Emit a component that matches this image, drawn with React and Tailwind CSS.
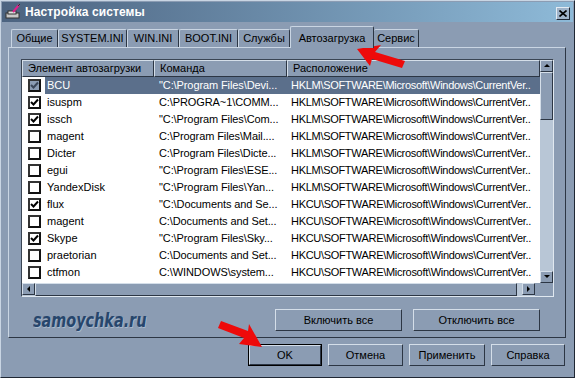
import React from 'react';

const rows = [
  { name: 'BCU', cmd: '"C:\\Program Files\\Devi...', loc: 'HKLM', on: true, sel: true },
  { name: 'isuspm', cmd: 'C:\\PROGRA~1\\COMM...', loc: 'HKLM', on: true },
  { name: 'issch', cmd: '"C:\\Program Files\\Com...', loc: 'HKLM', on: true },
  { name: 'magent', cmd: 'C:\\Program Files\\Mail....', loc: 'HKLM', on: false },
  { name: 'Dicter', cmd: 'C:\\Program Files\\Dicte...', loc: 'HKLM', on: false },
  { name: 'egui', cmd: '"C:\\Program Files\\ESE...', loc: 'HKLM', on: false },
  { name: 'YandexDisk', cmd: '"C:\\Program Files\\Yan...', loc: 'HKLM', on: false },
  { name: 'flux', cmd: '"C:\\Documents and Se...', loc: 'HKCU', on: true },
  { name: 'magent', cmd: 'C:\\Documents and Set...', loc: 'HKCU', on: false },
  { name: 'Skype', cmd: '"C:\\Program Files\\Sky...', loc: 'HKCU', on: true },
  { name: 'praetorian', cmd: 'C:\\Documents and Set...', loc: 'HKCU', on: false },
  { name: 'ctfmon', cmd: 'C:\\WINDOWS\\system...', loc: 'HKCU', on: false },
];

const tabs = [
  { t: 'Общие', w: 'w-[47px]' },
  { t: 'SYSTEM.INI', w: 'w-[69px]' },
  { t: 'WIN.INI', w: 'w-[52px]' },
  { t: 'BOOT.INI', w: 'w-[59px]' },
  { t: 'Службы', w: 'w-[52px]' },
];

function Check({ on, dim }) {
  return (
    <div className={`w-[13px] h-[13px] border-2 border-t-[#333] border-l-[#333] border-b-[#111] border-r-[#111] flex items-center justify-center ${dim ? 'bg-[#8b9cb3]' : 'bg-white'}`}>
      {on && (
        <svg width="9" height="9" viewBox="0 0 9 9">
          <path d="M1 4 L3.5 6.5 L8 1.5" stroke={dim ? '#3a4658' : '#000'} strokeWidth="2" fill="none" />
        </svg>
      )}
    </div>
  );
}

function Btn({ children, w, def }) {
  return (
    <div className={`${w} h-[22px] ${def ? 'border border-black' : ''}`}>
      <div className="w-full h-full border border-t-[#d4dee9] border-l-[#d4dee9] border-b-[#2c3644] border-r-[#2c3644] flex items-center justify-center text-[11px] text-black">
        {children}
      </div>
    </div>
  );
}

function ScrollArrow({ dir }) {
  const pts = { up: '1,5 4,2 7,5', down: '1,2 4,5 7,2', left: '5,1 2,4 5,7', right: '2,1 5,4 2,7' }[dir];
  return (
    <div className="w-[13px] h-[12px] bg-[#8b9cb3] border border-t-[#d4dee9] border-l-[#d4dee9] border-b-[#2c3644] border-r-[#2c3644] flex items-center justify-center shrink-0">
      <svg width="8" height="8" viewBox="0 0 8 8"><polygon points={pts} fill="#000" /></svg>
    </div>
  );
}

export default function App() {
  return (
    <div
      className="relative w-[575px] h-[378px] overflow-hidden bg-[#8b9cb3] border border-t-[#c9d5e3] border-l-[#c9d5e3] border-r-[#1f2733] border-b-[#1f2733] p-[1px]"
      style={{ fontFamily: '"Liberation Sans", Arial, sans-serif' }}
    >
      {/* Title bar */}
      <div className="h-[20px] flex items-center bg-gradient-to-r from-[#4c6380] to-[#8ebad8] pl-[3px] pr-[3px]">
        <svg width="17" height="16" viewBox="0 0 17 16" className="mr-[3px]">
          <rect x="1" y="9" width="13" height="5" fill="#c8c8c8" stroke="#333" strokeWidth="1" />
          <rect x="3" y="7" width="8" height="3" fill="#e0e0e0" stroke="#333" strokeWidth="1" />
          <line x1="8" y1="8" x2="14" y2="1" stroke="#e0208a" strokeWidth="2" />
          <line x1="13" y1="2" x2="15" y2="0" stroke="#333" strokeWidth="1" />
        </svg>
        <span className="text-white font-bold text-[12px] tracking-[0.1px]">Настройка системы</span>
        <div className="ml-auto w-[14px] h-[13px] bg-[#9fb3c9] border border-t-[#e3ebf3] border-l-[#e3ebf3] border-b-[#1f2733] border-r-[#1f2733] flex items-center justify-center mt-[3px]">
          <svg width="8" height="7" viewBox="0 0 8 7">
            <path d="M0.5 0.5 L7.5 6.5 M7.5 0.5 L0.5 6.5" stroke="#000" strokeWidth="1.6" />
          </svg>
        </div>
      </div>

      {/* Tabs */}
      <div className="flex items-end h-[25px] pl-[9px]">
        {tabs.map(({ t, w }) => (
          <div key={t} className={`${w} h-[18px] flex items-center justify-center text-[11px] text-black border-t border-l border-r border-t-[#c9d5e3] border-l-[#c9d5e3] border-r-[#2c3644] rounded-t-[2px] whitespace-nowrap`}>
            {t}
          </div>
        ))}
        <div className="w-[84px] h-[22px] -mb-[1px] bg-[#8b9cb3] relative z-10 flex items-start justify-center pt-[3px] text-[11px] text-black border-t border-l border-r border-t-[#c9d5e3] border-l-[#c9d5e3] border-r-[#2c3644] rounded-t-[2px]">
          Автозагрузка
        </div>
        <div className="w-[45px] h-[18px] flex items-center justify-center text-[11px] text-black border-t border-r border-t-[#c9d5e3] border-r-[#2c3644] rounded-t-[2px]">
          Сервис
        </div>
      </div>

      {/* Panel */}
      <div className="ml-[6px] w-[558px] h-[291px] border border-t-[#c9d5e3] border-l-[#c9d5e3] border-r-[#2c3644] border-b-[#2c3644] pt-[11px] pl-[12px]">
        {/* List view */}
        <div className="w-[533px] h-[238px] border border-t-[#3a4554] border-l-[#3a4554] border-b-[#e0e8f0] border-r-[#e0e8f0] flex flex-col bg-white">
          <div className="flex flex-1 min-h-0">
            <div className="flex-1 min-w-0 flex flex-col">
              {/* header */}
              <div className="h-[17px] flex bg-[#8b9cb3] text-[11px] text-black shrink-0">
                <div className="w-[132px] pl-[5px] flex items-center border border-t-[#d4dee9] border-l-[#d4dee9] border-b-[#2c3644] border-r-[#2c3644]">Элемент автозагрузки</div>
                <div className="w-[133px] pl-[5px] flex items-center border border-t-[#d4dee9] border-l-[#d4dee9] border-b-[#2c3644] border-r-[#2c3644]">Команда</div>
                <div className="flex-1 pl-[5px] flex items-center border border-t-[#d4dee9] border-l-[#d4dee9] border-b-[#2c3644] border-r-[#2c3644]">Расположение</div>
              </div>
              {rows.map((r, i) => (
                <div key={i} className="h-[17px] flex items-center text-[11px] shrink-0">
                  <div className="w-[23px] pl-[6px] flex items-center shrink-0">
                    <Check on={r.on} dim={r.sel} />
                  </div>
                  <div className={`flex-1 flex h-full items-center ${r.sel ? 'bg-[#5b6f8b] text-white' : 'text-black'}`}>
                    <div className="w-[109px] pl-[2px] whitespace-nowrap overflow-hidden">{r.name}</div>
                    <div className="w-[133px] pl-[5px] whitespace-nowrap overflow-hidden tracking-[-0.1px]">{r.cmd}</div>
                    <div className="flex-1 pl-[4px] whitespace-nowrap overflow-hidden tracking-[-0.3px]">{r.loc}\SOFTWARE\Microsoft\Windows\CurrentVer..</div>
                  </div>
                </div>
              ))}
            </div>
            {/* vertical scrollbar */}
            <div className="w-[13px] flex flex-col bg-[#b8c6d6] shrink-0">
              <ScrollArrow dir="up" />
              <div className="h-[48px] bg-[#8b9cb3] border border-t-[#d4dee9] border-l-[#d4dee9] border-b-[#2c3644] border-r-[#2c3644]" />
              <div className="flex-1" />
              <ScrollArrow dir="down" />
            </div>
          </div>
          {/* horizontal scrollbar */}
          <div className="h-[13px] flex bg-[#b8c6d6] shrink-0">
            <ScrollArrow dir="left" />
            <div className="w-[482px] bg-[#8b9cb3] border border-t-[#d4dee9] border-l-[#d4dee9] border-b-[#2c3644] border-r-[#2c3644]" />
            <div className="flex-1" />
            <ScrollArrow dir="right" />
            <div className="w-[18px] bg-[#8b9cb3]" />
          </div>
        </div>

        <div className="flex items-center mt-[8px] w-[533px]">
          <div className="w-[254px] pl-[12px] overflow-hidden">
            <div
              className="inline-block origin-left scale-x-[0.72] text-[20px] font-bold italic text-[#27466c]"
              style={{ fontFamily: '"DejaVu Sans", sans-serif', textShadow: '1px 1px 0 #a9b9cc' }}
            >
              samoychka.ru
            </div>
          </div>
          <Btn w="w-[127px]">Включить все</Btn>
          <div className="w-[11px]" />
          <Btn w="w-[127px]">Отключить все</Btn>
        </div>
      </div>

      {/* Bottom buttons */}
      <div className="flex justify-end gap-[6px] mt-[6px] pr-[8px]">
        <Btn w="w-[74px]" def>OK</Btn>
        <Btn w="w-[75px]">Отмена</Btn>
        <Btn w="w-[76px]">Применить</Btn>
        <Btn w="w-[74px]">Справка</Btn>
      </div>

      {/* Red arrows */}
      <svg className="absolute left-0 top-0 pointer-events-none" width="575" height="378">
        <polygon points="356,48 380,44 374,51 404,60 401,67 371,58 369,65" fill="#ee0a0a" />
        <polygon points="261,346 238,343 243,337 217,327 220,320 247,330 248,323" fill="#ee0a0a" />
      </svg>
    </div>
  );
}
